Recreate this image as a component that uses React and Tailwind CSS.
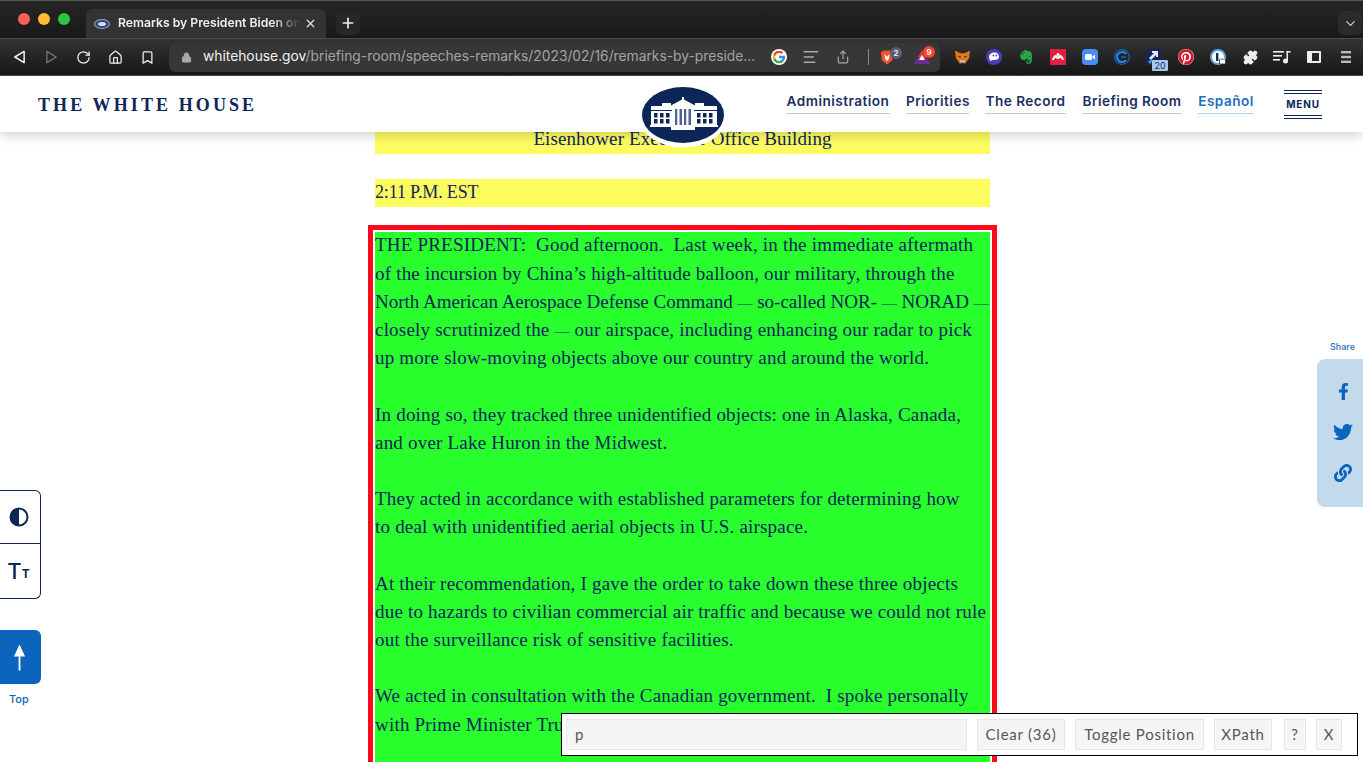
import { ChevronDown, Plus, X, RotateCw, Home, Bookmark, Lock, Share, Puzzle, AlignLeft } from 'lucide-react';
import { FaFacebookF, FaTwitter, FaLink, FaEvernote, FaPinterest } from 'react-icons/fa';

const sans = "font-['Inter','Liberation_Sans',sans-serif]";
const serif = "font-['Liberation_Serif',serif]";

const navLinks = [
  { label: 'Administration', w: 'w-[104px]' },
  { label: 'Priorities', w: 'w-[63px]' },
  { label: 'The Record', w: 'w-[81px]' },
  { label: 'Briefing Room', w: 'w-[100px]' },
];

/* Page copy, broken the way the screenshot breaks it. */
const paragraphs = [
  [
    'THE PRESIDENT:  Good afternoon.  Last week, in the immediate aftermath',
    'of the incursion by China’s high-altitude balloon, our military, through the',
    'North American Aerospace Defense Command — so-called NOR- — NORAD —',
    'closely scrutinized the — our airspace, including enhancing our radar to pick',
    'up more slow-moving objects above our country and around the world.',
  ],
  [
    'In doing so, they tracked three unidentified objects: one in Alaska, Canada,',
    'and over Lake Huron in the Midwest.',
  ],
  [
    'They acted in accordance with established parameters for determining how',
    'to deal with unidentified aerial objects in U.S. airspace.',
  ],
  [
    'At their recommendation, I gave the order to take down these three objects',
    'due to hazards to civilian commercial air traffic and because we could not rule',
    'out the surveillance risk of sensitive facilities.',
  ],
  [
    'We acted in consultation with the Canadian government.  I spoke personally',
    'with Prime Minister Trudeau, and we agreed to take down the object over',
  ],
];

/* Liberation's em dash runs wider than the site's serif, so dashes get a smaller size. */
function Line({ text }) {
  const parts = text.split('—');
  return (
    <span className={`block h-[28.2px] -translate-y-px whitespace-pre ${parts.length > 3 ? '' : 'tracking-[0.2px]'}`}>
      {parts.map((part, i) => (
        <span key={i}>
          {i > 0 && <span className="text-[15px] leading-none">—</span>}
          {part}
        </span>
      ))}
    </span>
  );
}

function Seal({ className }) {
  const windows = [14, 20, 26, 57, 63, 69];
  const columns = [33, 37.5, 42, 46.5, 51];
  return (
    <svg viewBox="0 0 88 64" className={className}>
      <ellipse cx="43" cy="32.5" rx="44" ry="31" fill="#fff" />
      <ellipse cx="43" cy="31" rx="41" ry="28" fill="#0b2657" />
      <g fill="#fff">
        <rect x="11" y="22" width="21" height="20" />
        <rect x="54" y="22" width="23" height="20" />
        <rect x="10" y="41" width="68" height="2" />
        <rect x="31" y="22" width="24" height="22" />
        <rect x="31" y="44" width="24" height="2" />
        <path d="M30 22 L43 15 L56 22 Z" />
        <rect x="42" y="13" width="2" height="4" />
        <rect x="22" y="19" width="9" height="3" />
        <rect x="55" y="19" width="9" height="3" />
      </g>
      <rect x="11" y="26" width="21" height="1" fill="#0b2657" />
      <rect x="54" y="26" width="23" height="1" fill="#0b2657" />
      {windows.map((x) => (
        <g key={x} fill="#0b2657">
          <rect x={x} y="29" width="3.5" height="4.5" />
          <rect x={x} y="35" width="3.5" height="4.5" />
        </g>
      ))}
      <g fill="#4d6490">
        <rect x="35" y="25" width="2.5" height="16" />
        <rect x="39.5" y="25" width="2.5" height="16" />
        <rect x="44" y="25" width="2.5" height="16" />
        <rect x="48.5" y="25" width="2.5" height="16" />
      </g>
      {columns.map((x) => (
        <rect key={x} x={x} y="24" width="1.5" height="18" fill="#fff" />
      ))}
    </svg>
  );
}

function GoogleIcon() {
  return (
    <svg viewBox="0 0 18 18" className="h-4 w-4 rounded-full bg-white p-[1.5px]">
      <path fill="#4285F4" d="M17.6 9.2c0-.6-.1-1.2-.2-1.8H9v3.4h4.8c-.2 1.1-.8 2-1.8 2.7v2.2h2.9c1.7-1.6 2.7-3.9 2.7-6.5z" />
      <path fill="#34A853" d="M9 18c2.4 0 4.5-.8 5.9-2.2L12 13.6c-.8.5-1.8.9-3 .9-2.3 0-4.3-1.6-5-3.7H1v2.3C2.5 16 5.5 18 9 18z" />
      <path fill="#FBBC05" d="M4 10.7c-.2-.5-.3-1.1-.3-1.7s.1-1.2.3-1.7V5H1C.4 6.2 0 7.6 0 9s.4 2.8 1 4l3-2.3z" />
      <path fill="#EA4335" d="M9 3.6c1.3 0 2.5.5 3.4 1.3L15 2.4C13.5 1 11.4 0 9 0 5.500 0 2.500 2 1 5l3 2.3c.7-2.1 2.7-3.7 5-3.7z" />
    </svg>
  );
}

function Slot({ children, className = '' }) {
  return <span className={`relative flex h-4 w-8 shrink-0 items-center justify-center ${className}`}>{children}</span>;
}

function ChromeBar() {
  return (
    <div className={`${sans} shrink-0`}>
      {/* tab strip */}
      <div className="flex h-[38px] items-end border-t border-[#555] bg-gradient-to-b from-[#262626] to-[#191919]">
        <div className="flex h-[38px] w-[86px] shrink-0 items-center gap-2 pb-[1px] pl-[18px]">
          <span className="h-3 w-3 rounded-full bg-[#ff5f57]" />
          <span className="h-3 w-3 rounded-full bg-[#febc2e]" />
          <span className="h-3 w-3 rounded-full bg-[#28c840]" />
        </div>
        <div className="flex h-[29px] w-[240px] items-center rounded-t-md bg-[#333] pl-2 pr-[9px]">
          <span className="flex h-[10px] w-4 shrink-0 items-center justify-center rounded-[50%] border border-[#8ea2c4] bg-[#2d4a7c]">
            <span className="h-1 w-2 rounded-[50%] bg-[#d5dbe8]" />
          </span>
          <span className="ml-2 w-[182px] overflow-hidden whitespace-nowrap text-[12.2px] font-semibold text-[#eee] [mask-image:linear-gradient(to_right,black_85%,transparent)]">
            Remarks by President Biden on
          </span>
          <X size={13} strokeWidth={2.5} className="ml-auto text-[#ddd]" />
        </div>
        <div className="mb-[3px] ml-[10px] flex h-6 w-6 items-center justify-center rounded-md bg-[#262626]">
          <Plus size={16} strokeWidth={2.5} className="text-[#eee]" />
        </div>
        <div className="mb-[3px] ml-auto mr-[1px] flex h-6 w-6 items-center justify-center rounded-md bg-[#2b2b2b]">
          <ChevronDown size={15} className="text-[#ccc]" />
        </div>
      </div>

      {/* toolbar */}
      <div className="flex h-[38px] items-center border-y border-y-[#4a4a4a] bg-gradient-to-b from-[#333] to-[#171717] pl-[3px]">
        <Slot>
          <svg viewBox="0 0 14 16" className="h-4 w-[13px]" fill="none" stroke="#eee" strokeWidth="1.7" strokeLinejoin="round"><path d="M12 2 L2 8 L12 14 Z" /></svg>
        </Slot>
        <Slot>
          <svg viewBox="0 0 14 16" className="h-4 w-[13px]" fill="none" stroke="#777" strokeWidth="1.4" strokeLinejoin="round"><path d="M2 2 L12 8 L2 14 Z" /></svg>
        </Slot>
        <Slot><RotateCw size={15} strokeWidth={2} className="text-[#eee]" /></Slot>
        <Slot><Home size={15} strokeWidth={2} className="text-[#eee]" /></Slot>
        <Slot><Bookmark size={15} strokeWidth={2} className="text-[#eee]" /></Slot>

        {/* address bar */}
        <div className="ml-[6px] flex h-[29px] w-[771px] items-center rounded-md bg-[#373737]">
          <Lock size={11} className="ml-[12px] shrink-0 fill-[#aaa] text-[#aaa]" />
          <span className="ml-[11px] w-[553px] overflow-hidden whitespace-nowrap pb-[1px] text-[13.8px] text-[#a3a3a3]">
            <span className="text-[#f2f2f2]">whitehouse.gov</span>/briefing-room/speeches-remarks/2023/02/16/remarks-by-preside...
          </span>
          <span className="ml-[7px] flex">
            <Slot><GoogleIcon /></Slot>
            <Slot><AlignLeft size={18} className="text-[#aaa]" /></Slot>
            <Slot><Share size={14} className="text-[#aaa]" /></Slot>
          </span>
          <span className="ml-[9px] h-4 w-px bg-[#888]" />
          <Slot className="ml-[2px]">
            <svg viewBox="0 0 16 18" className="h-[17px] w-[14px]"><path d="M1 3 L5 1 H11 L15 3 L14 12 L8 17 L2 12 Z" fill="#f0562a" /><path d="M5 5 L8 8 L11 5 L10 11 L8 13 L6 11 Z" fill="#fff" /></svg>
            <span className="absolute left-[19px] top-[-2px] flex h-3 w-3 items-center justify-center rounded-full bg-[#5a5e70] text-[8px] font-semibold text-white">2</span>
          </Slot>
          <Slot className="ml-[3px]">
            <svg viewBox="0 0 18 16" className="h-4 w-[18px]"><path d="M9 1 L17 15 H1 Z" fill="#e0383a" /><path d="M1 15 L5 8 L9 12 L13 8 L17 15 Z" fill="#6a2d91" /><path d="M6 11 L9 6 L12 11 Z" fill="#fff" /></svg>
            <span className="absolute left-[17px] top-[-3px] flex h-3 w-3 items-center justify-center rounded-full bg-[#f0452f] text-[8px] font-semibold text-white">9</span>
          </Slot>
        </div>

        {/* extensions */}
        <div className="ml-[6px] flex">
          <Slot>
            <svg viewBox="0 0 18 16" className="h-4 w-[17px]"><path d="M1 1 L7 4 H11 L17 1 L16 9 L12 15 H6 L2 9 Z" fill="#e2761b" /><path d="M6 11 L9 12 L12 11 L11 15 H7 Z" fill="#d7c1b3" /><path d="M4 7 H7 V9 Z M14 7 H11 V9 Z" fill="#233447" /><path d="M7 14 H11 V16 H7 Z" fill="#233447" /></svg>
          </Slot>
          <Slot>
            <svg viewBox="0 0 16 16" className="h-4 w-4"><circle cx="8" cy="8" r="8" fill="#4a3db8" /><path d="M3 8.5 C3 5 5.5 3.5 8.5 3.5 C11.5 3.5 13 5.5 13 8 C13 10 11 11 8.5 11 C6 11 5 12 3.5 11.5 C4.5 11 3 10 3 8.5 Z" fill="#fff" /><circle cx="7.5" cy="6.5" r=".9" fill="#4a3db8" /><circle cx="10.5" cy="6.5" r=".9" fill="#4a3db8" /></svg>
          </Slot>
          <Slot><FaEvernote size={16} className="text-[#2aa34a]" /></Slot>
          <Slot>
            <svg viewBox="0 0 16 16" className="h-4 w-4"><rect width="16" height="16" fill="#e0203c" /><g fill="#fff"><circle cx="8" cy="5.5" r="1.6" /><path d="M2 11 C3 7 5 6 5.5 6 C6.5 6 7 7.5 8 7.5 C9 7.5 9.5 6 10.5 6 C11 6 13 7 14 11 H12 C11.5 9.5 11 9 10.5 9 C9.5 9 9 10 8 10 C7 10 6.5 9 5.500 9 C5 9 4.5 9.5 4 11 Z" /></g></svg>
          </Slot>
          <Slot>
            <svg viewBox="0 0 16 16" className="h-4 w-4"><rect width="16" height="16" rx="4" fill="#4a8df0" /><rect x="3" y="5" width="7" height="6" rx="1.5" fill="#fff" /><path d="M10.5 7.5 L13 5.5 V10.5 L10.5 8.5 Z" fill="#fff" /></svg>
          </Slot>
          <Slot>
            <svg viewBox="0 0 16 16" className="h-4 w-4" fill="none"><circle cx="8" cy="8" r="7.3" stroke="#1560c4" strokeWidth="1.3" /><path d="M12 5 A5 5 0 1 0 12 11" stroke="#1a8cf0" strokeWidth="2" /><path d="M7 8 H12" stroke="#1a8cf0" strokeWidth="1" /></svg>
          </Slot>
          <Slot>
            <svg viewBox="0 0 16 16" className="h-4 w-4"><rect width="16" height="16" fill="#16264f" /><path d="M3 9 L8 4 H6 V2 H12 V8 H10 V6 L5 11 Z" fill="#dbe8f8" /><path d="M2 13 L5 10 L7 12 L4 15 Z" fill="#3f8fe0" /></svg>
            <span className="absolute left-[14px] top-[11px] flex h-[11px] w-4 items-center justify-center rounded-[1px] bg-[#a9c7ee] text-[9px] leading-none text-[#1c2e4a]">20</span>
          </Slot>
          <Slot><span className="flex h-4 w-4 items-center justify-center rounded-full bg-white"><FaPinterest size={16} className="text-[#d8182c]" /></span></Slot>
          <Slot>
            <svg viewBox="0 0 16 16" className="h-4 w-4"><circle cx="8" cy="8" r="7" fill="#fff" stroke="#5ba5e8" strokeWidth="2" /><rect x="6" y="4" width="2.4" height="8" fill="#1f2b44" /><rect x="9.5" y="10" width="6" height="5" rx="1" fill="#fff" stroke="#1f2b44" strokeWidth=".8" /><path d="M11 10 V8.5 H14 V10" fill="none" stroke="#fff" strokeWidth="1" /></svg>
          </Slot>
          <Slot><Puzzle size={15} className="fill-[#eee] text-[#eee]" /></Slot>
          <Slot>
            <svg viewBox="0 0 18 14" className="h-[14px] w-[18px]" fill="#eee"><rect y="1" width="11" height="1.6" /><rect y="5" width="9" height="1.6" /><rect y="9" width="7" height="1.6" /><rect x="13.5" y="1" width="4" height="1.6" /><rect x="13.5" y="1" width="1.5" height="10" /><circle cx="12.5" cy="11" r="2.5" /></svg>
          </Slot>
          <Slot>
            <span className="h-3 w-[14px] rounded-[1px] border-2 border-l-[5px] border-[#eee]" />
          </Slot>
          <Slot>
            <svg viewBox="0 0 10 12" className="h-3 w-[10px]" fill="#bbb"><rect width="10" height="2.4" /><rect y="4.8" width="10" height="2.4" /><rect y="9.6" width="10" height="2.4" /></svg>
          </Slot>
        </div>
      </div>
    </div>
  );
}

function SiteHeader() {
  return (
    <header className={`${sans} relative z-10 flex h-[56px] shrink-0 items-center bg-white pl-[38px] shadow-[0_2px_12px_rgba(0,0,0,0.22)]`}>
      <span className={`${serif} whitespace-nowrap pt-[2px] text-[18px] font-bold tracking-[3.1px] text-[#0b2657]`}>THE WHITE HOUSE</span>
      <Seal className="absolute left-[640px] top-[8px] h-[64px] w-[88px]" />
      <nav className="ml-auto flex items-start gap-4 pb-[3px] text-[13.6px] font-semibold text-[#1b2f63]">
        {navLinks.map((l) => (
          <a key={l.label} className={`${l.w} whitespace-nowrap border-b border-[#c4c6d4] pb-[2px] text-center tracking-[0.035em]`}>{l.label}</a>
        ))}
        <a className="w-[56px] whitespace-nowrap border-b border-[#b7d2ec] pb-[2px] text-center tracking-[0.035em] text-[#1f6fbd]">Español</a>
      </nav>
      <div className="ml-[30px] mr-[41px] flex h-[29px] w-[38px] flex-col justify-between">
        <span className="block h-[4px] border-y border-[#0b2657]" />
        <span className="text-center text-[10px] font-bold leading-none tracking-[0.08em] text-[#0b2657]">MENU</span>
        <span className="block h-[4px] border-y border-[#0b2657]" />
      </div>
    </header>
  );
}

function Article() {
  return (
    <main className={`${serif} -mt-[6px] ml-[368px] w-[629px] text-[19px] leading-[28.2px] text-[#10245c]`}>
      <p className="mx-[7px] mb-[25px] bg-[#fdfc5f] text-center">
        <span className="block -translate-y-px tracking-[0.1px]">Eisenhower Executive Office Building</span>
      </p>
      <p className="mx-[7px] mb-[18px] bg-[#fdfc5f]">
        <span className="block -translate-y-px text-[18px] tracking-[-0.15px]">2:11 P.M. EST</span>
      </p>
      <div className="border-[5px] border-[#fb0a1c] bg-white p-[2px]">
        <div className="flex flex-col gap-[28.2px] bg-[#29ff2c] pb-10">
          {paragraphs.map((lines, i) => (
            <p key={i}>
              {lines.map((line) => (
                <Line key={line} text={line} />
              ))}
            </p>
          ))}
        </div>
      </div>
    </main>
  );
}

function SideTools() {
  return (
    <div className={sans}>
      <div className="absolute left-0 top-[490px] flex w-[41px] flex-col rounded-r-md border border-l-0 border-[#0b2657] bg-white">
        <div className="flex h-[53px] items-center justify-center border-b border-[#0b2657]">
          <svg viewBox="0 0 20 20" className="ml-[-3px] h-5 w-5"><circle cx="10" cy="10" r="8.5" fill="#fff" stroke="#0b2657" strokeWidth="2" /><path d="M10 1.5 A8.5 8.5 0 0 0 10 18.5 Z" fill="#0b2657" /></svg>
        </div>
        <div className="flex h-[54px] items-center justify-center pr-[3px] text-[#0b2657]">
          <span className="text-[22px] font-medium leading-none">T</span>
          <span className="mt-[5px] text-[12px] font-bold leading-none">T</span>
        </div>
      </div>

      <div className="absolute left-0 top-[630px] flex h-[54px] w-[41px] items-center justify-center rounded-r-md bg-[#0b65bd]">
        <svg viewBox="0 0 14 30" className="ml-[-3px] h-[29px] w-[13px]"><path d="M7 1 L13 14 H8 V29 H6 V14 H1 Z" fill="#fff" /></svg>
      </div>
      <span className="absolute left-[9px] top-[693px] text-[11px] font-medium leading-[13px] text-[#0b65bd]">Top</span>

      <span className="absolute left-[1330px] top-[341px] text-[9px] font-medium leading-[11px] text-[#1f6fbd]">Share</span>
      <div className="absolute left-[1317px] top-[359px] flex h-[148px] w-[46px] flex-col items-center gap-[22px] rounded-l-lg bg-[#c3daed] pl-[6px] pt-[24px] text-[#0b65bd]">
        <FaFacebookF size={17} />
        <FaTwitter size={20} />
        <FaLink size={18} />
      </div>
    </div>
  );
}

/* Element-picker bar that sits over the page, bottom right. */
function PickerBar() {
  const btn = 'flex h-[31px] items-center justify-center border border-[#e6e6e6] bg-[#f5f5f5] text-[15px] tracking-[0.05em] text-[#555]';
  return (
    <div className="absolute left-[561px] top-[713px] flex h-[43px] w-[797px] items-center border border-black bg-white pl-[4px] font-['Lato','Open_Sans',sans-serif]">
      <div className={`${btn} w-[401px] !justify-start pl-2`}>p</div>
      <div className={`${btn} ml-[10px] w-[88px]`}>Clear (36)</div>
      <div className={`${btn} ml-[10px] w-[129px]`}>Toggle Position</div>
      <div className={`${btn} ml-[10px] w-[58px]`}>XPath</div>
      <div className={`${btn} ml-[12px] w-[22px]`}>?</div>
      <div className={`${btn} ml-[10px] w-[26px]`}>X</div>
    </div>
  );
}

export default function App() {
  return (
    <div className="relative flex h-[762px] w-[1363px] flex-col overflow-hidden bg-white">
      <ChromeBar />
      <SiteHeader />
      <Article />
      <SideTools />
      <PickerBar />
    </div>
  );
}
